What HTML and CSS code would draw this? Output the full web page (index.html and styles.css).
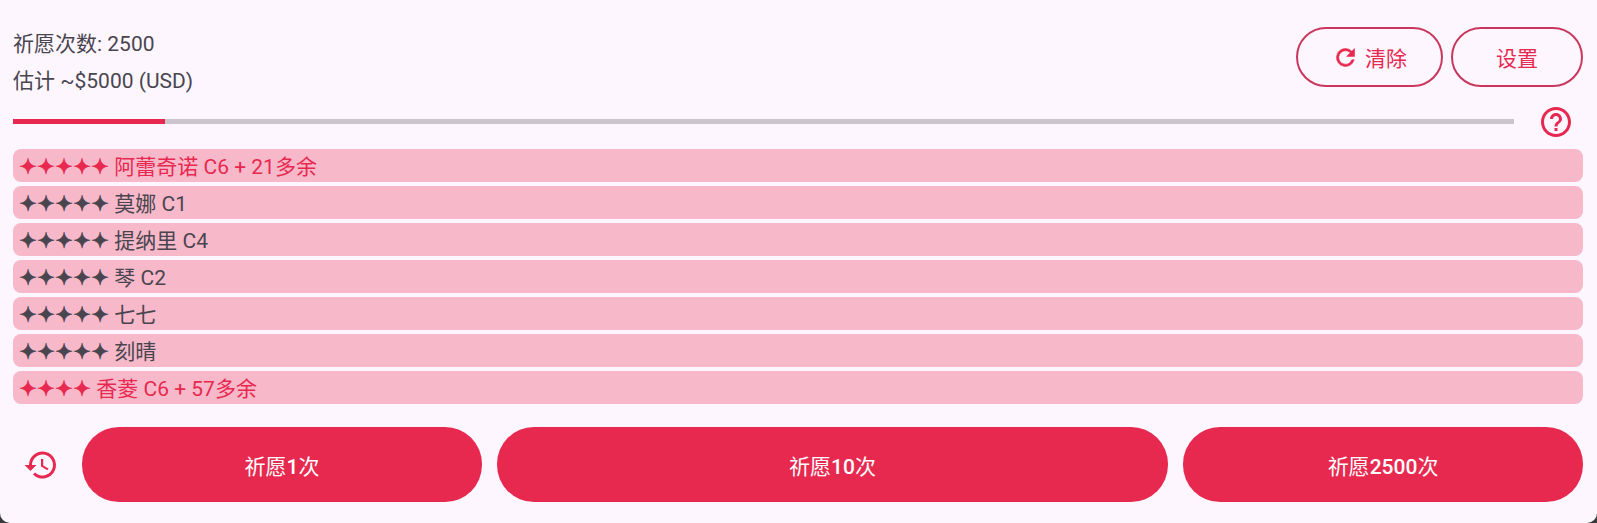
FILE: index.html
```html
<!DOCTYPE html>
<html>

<head>
  <meta charset='utf-8'>
  <title>祈愿模拟</title>
  <link rel="stylesheet" href="styles.css">
</head>

<body>
  <div class='panel'>
    <div class='header'>
      <div class='summary'>
        <div class='summary-line'>祈愿次数: 2500</div>
        <div class='summary-line'>估计 ~$5000 (USD)</div>
      </div>
      <div class='header-actions'>
        <button class='outline-button clear-button'>
          <svg class='clear-icon' viewBox='0 0 24 24'>
            <path d='M17.65 6.35A7.96 7.96 0 0 0 12 4a8 8 0 1 0 7.73 10h-2.08A6 6 0 1 1 12 6c1.66 0 3.14.69 4.22 1.78L13 11h7V4l-2.35 2.35z' />
          </svg>
          清除
        </button>
        <button class='outline-button settings-button'>设置</button>
      </div>
    </div>
    <div class='progress-row'>
      <div class='progress-track'>
        <div class='progress-fill' style='width: 10.1%'></div>
      </div>
      <svg class='help-icon' viewBox='0 0 24 24'>
        <path d='M11 18h2v-2h-2v2zm1-16C6.48 2 2 6.48 2 12s4.48 10 10 10 10-4.48 10-10S17.52 2 12 2zm0 18c-4.41 0-8-3.59-8-8s3.59-8 8-8 8 3.59 8 8-3.59 8-8 8zm0-14c-2.21 0-4 1.79-4 4h2c0-1.1.9-2 2-2s2 .9 2 2c0 2-3 1.75-3 5h2c0-2.25 3-2.5 3-5 0-2.21-1.79-4-4-4z' />
      </svg>
    </div>
    <div class='results'>
      <div class='result highlight'><span class='stars'>✦✦✦✦✦</span> 阿蕾奇诺 C6 + 21多余</div>
      <div class='result'><span class='stars'>✦✦✦✦✦</span> 莫娜 C1</div>
      <div class='result'><span class='stars'>✦✦✦✦✦</span> 提纳里 C4</div>
      <div class='result'><span class='stars'>✦✦✦✦✦</span> 琴 C2</div>
      <div class='result'><span class='stars'>✦✦✦✦✦</span> 七七</div>
      <div class='result'><span class='stars'>✦✦✦✦✦</span> 刻晴</div>
      <div class='result highlight'><span class='stars'>✦✦✦✦</span> 香菱 C6 + 57多余</div>
    </div>
    <div class='footer'>
      <svg class='history-icon' viewBox='0 0 24 24'>
        <path d='M13 3a9 9 0 0 0-9 9H1l3.89 3.89.07.14L9 12H6a7 7 0 1 1 2.05 4.95l-1.42 1.42A9 9 0 1 0 13 3zm-1 5v5l4.28 2.54.72-1.21-3.5-2.08V8H12z' />
      </svg>
      <button class='wish-button wish-one'>祈愿<b>1</b>次</button>
      <button class='wish-button wish-ten'>祈愿<b>10</b>次</button>
      <button class='wish-button wish-all'>祈愿<b>2500</b>次</button>
    </div>
  </div>
</body>

</html>
```

FILE: styles.css
```css
html,
body {
  height: 100%;
}

body {
  margin: 0;
  background-color: #3a3a3a;
  color: #49454f;
  font-family: "Roboto", "Noto Sans CJK SC", sans-serif;
  font-size: 21px;
}

.panel {
  display: flex;
  flex-direction: column;
  height: 523px;
  padding: 0 14px 0 13px;
  box-sizing: border-box;
  border-radius: 0 0 10px 10px;
  background-color: #fdf6ff;
}

.header {
  display: flex;
  justify-content: space-between;
  height: 119px;
  padding-top: 26px;
  box-sizing: border-box;
}

.summary-line {
  height: 37px;
  line-height: 37px;
}

.header-actions {
  display: flex;
  gap: 8px;
  padding-top: 1px;
}

.outline-button {
  display: flex;
  align-items: center;
  justify-content: center;
  gap: 6px;
  height: 60px;
  padding: 0;
  border: 2.5px solid #c9385c;
  border-radius: 30px;
  background: none;
  color: #e8294f;
  font: inherit;
}

.clear-button {
  width: 147px;
}

.settings-button {
  width: 132px;
}

.clear-icon {
  width: 27px;
  height: 27px;
  fill: #e8294f;
  stroke: #e8294f;
  stroke-width: 0.5;
}

.progress-row {
  display: flex;
  height: 30px;
  gap: 24px;
}

.progress-track {
  flex: 1;
  height: 5px;
  background-color: #cbc4cc;
}

.progress-fill {
  height: 100%;
  background-color: #e8294f;
}

.help-icon {
  width: 36px;
  height: 36px;
  margin: -15px 9px 0 0;
  fill: #e8294f;
}

.results {
  display: flex;
  flex-direction: column;
  gap: 4px;
}

.result {
  height: 33px;
  line-height: 36px;
  padding-left: 6px;
  border-radius: 8px;
  background-color: #f7b8ca;
}

.highlight {
  color: #e8294f;
}

.stars {
  font-family: "DejaVu Sans", sans-serif;
  font-size: 21.5px;
  -webkit-text-stroke: 0.8px currentColor;
}

.footer {
  display: flex;
  align-items: center;
  margin-top: 23px;
  gap: 15px;
}

.history-icon {
  width: 36px;
  height: 36px;
  margin: 0 8.5px 0 9.5px;
  fill: #e8294f;
}

.wish-button {
  height: 75px;
  border: none;
  border-radius: 37px;
  background-color: #e8294f;
  color: #fff;
  font: inherit;
}

.wish-button b {
  font-weight: 500;
}

.wish-one,
.wish-all {
  width: 400px;
}

.wish-ten {
  flex: 1;
}
```
